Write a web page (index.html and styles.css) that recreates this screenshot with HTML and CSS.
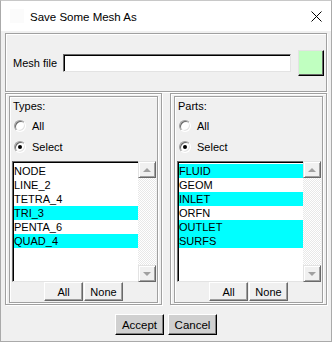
FILE: index.html
```html
<!DOCTYPE html>
<html lang="en">
  <head>
    <meta charset="UTF-8" />
    <title>Save Some Mesh As</title>
    <link rel="stylesheet" href="styles.css">
  </head>
  <body>
    <div class="window">
      <div class="titlebar">
        <span class="app-icon"></span>
        <span class="title">Save Some Mesh As</span>
        <svg class="close" width="11" height="11" viewBox="0 0 11 11">
          <path d="M0.5 0.5 L10.5 10.5 M10.5 0.5 L0.5 10.5" stroke="#000" stroke-width="1" fill="none" />
        </svg>
      </div>

      <div class="client">
        <div class="frame file-frame">
          <label class="file-label" for="mesh_file">Mesh file</label>
          <input class="text-input" id="mesh_file" type="text" />
          <button class="color-btn" type="button"></button>
        </div>

        <div class="columns">
          <!-- Types -->
          <div class="frame group">
            <div class="inner">
              <div class="group-title">Types:</div>
              <div class="radio-row first">
                <span class="radio"></span>
                <span>All</span>
              </div>
              <div class="radio-row">
                <span class="radio checked"></span>
                <span>Select</span>
              </div>
              <div class="list-row">
                <div class="listbox">
                  <div class="item">NODE</div>
                  <div class="item">LINE_2</div>
                  <div class="item">TETRA_4</div>
                  <div class="item selected">TRI_3</div>
                  <div class="item">PENTA_6</div>
                  <div class="item selected">QUAD_4</div>
                </div>
                <div class="scrollbar">
                  <div class="scroll-btn"><span class="arrow up"></span></div>
                  <div class="track"></div>
                  <div class="scroll-btn"><span class="arrow down"></span></div>
                </div>
              </div>
              <div class="btn-row">
                <button class="small-btn" type="button">All</button>
                <button class="small-btn" type="button">None</button>
              </div>
            </div>
          </div>

          <!-- Parts -->
          <div class="frame group">
            <div class="inner">
              <div class="group-title">Parts:</div>
              <div class="radio-row first">
                <span class="radio"></span>
                <span>All</span>
              </div>
              <div class="radio-row">
                <span class="radio checked"></span>
                <span>Select</span>
              </div>
              <div class="list-row">
                <div class="listbox">
                  <div class="item selected">FLUID</div>
                  <div class="item">GEOM</div>
                  <div class="item selected">INLET</div>
                  <div class="item">ORFN</div>
                  <div class="item selected">OUTLET</div>
                  <div class="item selected">SURFS</div>
                </div>
                <div class="scrollbar">
                  <div class="scroll-btn"><span class="arrow up"></span></div>
                  <div class="track"></div>
                  <div class="scroll-btn"><span class="arrow down"></span></div>
                </div>
              </div>
              <div class="btn-row">
                <button class="small-btn" type="button">All</button>
                <button class="small-btn" type="button">None</button>
              </div>
            </div>
          </div>
        </div>

        <div class="actions">
          <button class="action-btn" type="button">Accept</button>
          <button class="action-btn" type="button">Cancel</button>
        </div>
      </div>
    </div>
  </body>
</html>
```

FILE: styles.css
```css
* {
  box-sizing: border-box;
}

body {
  margin: 0;
  padding: 0;
  font-family: "Liberation Sans", Arial, sans-serif;
  font-size: 11px;
  color: #000;
  background: #f0f0f0;
}

.window {
  width: 332px;
  height: 342px;
  border: 1px solid #aaaaaa;
  border-top-color: #c8c8c8;
  background: #f0f0f0;
  display: flex;
  flex-direction: column;
}

/* Title bar */
.titlebar {
  height: 30px;
  background: #fff;
  display: flex;
  align-items: center;
  padding: 0 9px 0 9px;
}

.app-icon {
  width: 14px;
  height: 14px;
  background: #fbfbfb;
  margin-right: 6px;
}

.title {
  flex: 1;
  font-size: 11.5px;
  margin-top: 1px;
}

.close {
  display: block;
  margin-top: 1px;
}

/* Client area */
.client {
  padding: 2px 4px 0 4px;
}

/* etched group frame */
.frame {
  border: 1px solid #a0a0a0;
  box-shadow: 1px 1px 0 #fff, inset 1px 1px 0 #fff;
}

.file-frame {
  height: 59px;
  display: flex;
  align-items: center;
  padding: 0 2px 0 7px;
}

.file-label {
  width: 50px;
  flex: none;
}

.text-input {
  flex: 1;
  height: 18px;
  margin: 0;
  padding: 0 2px;
  font: inherit;
  background: #fff;
  border: 1px solid;
  border-color: #696969 #e3e3e3 #e3e3e3 #696969;
  box-shadow: inset 1px 1px 0 #000;
  outline: none;
}

.color-btn {
  width: 26px;
  height: 26px;
  margin: 0 0 0 7px;
  padding: 0;
  background: #c0ffc0;
  border: 1px solid;
  border-color: #e3e3e3 #000 #000 #e3e3e3;
  box-shadow: inset -1px -1px 0 #696969;
}

.columns {
  margin-top: 1px;
  display: flex;
  gap: 8px;
}

.group {
  width: 157px;
  height: 212px;
  padding: 2px 3px 1px 3px;
}

.group .inner {
  height: 207px;
  border: 1px solid #a0a0a0;
  box-shadow: 1px 1px 0 #fff, inset 1px 1px 0 #fff;
  display: flex;
  flex-direction: column;
}

.group-title {
  margin-top: 3px;
  padding-left: 3px;
  line-height: 13px;
}

.radio-row {
  display: flex;
  align-items: center;
  height: 14px;
  margin-top: 7px;
  padding-left: 4px;
}

.radio-row.first {
  margin-top: 6px;
}

.radio {
  width: 12px;
  height: 12px;
  margin-right: 6px;
  border-radius: 50%;
  background: #fff;
  border: 1px solid;
  border-color: #a0a0a0 #fff #fff #a0a0a0;
  box-shadow: inset 1px 1px 0 #696969, inset -1px -1px 0 #e3e3e3;
  position: relative;
}

.radio.checked::after {
  content: "";
  position: absolute;
  left: 3px;
  top: 3px;
  width: 4px;
  height: 4px;
  border-radius: 50%;
  background: #000;
}

.list-row {
  margin-top: 7px;
  margin-left: 2px;
  display: flex;
  height: 121px;
}

.listbox {
  width: 126px;
  background: #fff;
  border-left: 1px solid #696969;
  border-top: 1px solid #696969;
  border-bottom: 1px solid #e3e3e3;
  box-shadow: inset 1px 1px 0 #000;
  padding: 2px 0 0 1px;
}

.item {
  height: 14px;
  line-height: 14px;
  white-space: nowrap;
}

.item.selected {
  background: #00ffff;
}

.scrollbar {
  width: 18px;
  display: flex;
  flex-direction: column;
}

.scroll-btn {
  height: 17px;
  flex: none;
  background: #f0f0f0;
  border: 1px solid;
  border-color: #e3e3e3 #696969 #696969 #e3e3e3;
  box-shadow: inset 1px 1px 0 #fff, inset -1px -1px 0 #a0a0a0;
  display: flex;
  align-items: center;
  justify-content: center;
}

.arrow {
  width: 0;
  height: 0;
  border-left: 4px solid transparent;
  border-right: 4px solid transparent;
}

.arrow.up {
  border-bottom: 4px solid #a0a0a0;
}

.arrow.down {
  border-top: 4px solid #a0a0a0;
}

.track {
  flex: 1;
  background: repeating-conic-gradient(#fff 0 25%, #e8e8e8 0 50%) 0 0 / 2px 2px;
}

.btn-row {
  display: flex;
  justify-content: center;
  gap: 1px;
}

.small-btn {
  width: 39px;
  height: 19px;
  margin: 0;
  padding: 0;
  font: inherit;
  background: #f0f0f0;
  border: 1px solid;
  border-color: #fff #696969 #696969 #fff;
  box-shadow: inset -1px -1px 0 #a0a0a0;
}

.actions {
  margin-top: 9px;
  display: flex;
  justify-content: center;
  gap: 4px;
}

.action-btn {
  width: 49px;
  height: 21px;
  margin: 0;
  padding: 0;
  font: inherit;
  font-size: 11.5px;
  background: #d0d0d0;
  border: 1px solid;
  border-color: #fff #000 #000 #fff;
  box-shadow: inset -1px -1px 0 #808080;
}
```
